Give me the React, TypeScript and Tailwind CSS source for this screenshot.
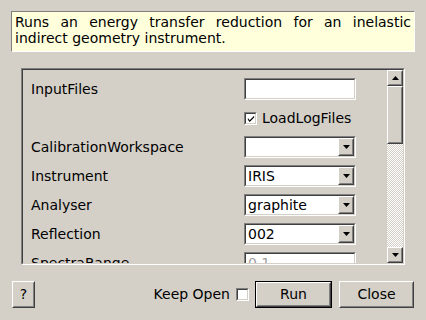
function Sunken({ className = "", children }: { className?: string; children?: React.ReactNode }) {
  return (
    <div className={"border border-t-[#808080] border-l-[#808080] border-b-white border-r-white " + className}>
      <div className="h-full w-full border border-t-[#404040] border-l-[#404040] border-b-[#d4d0c8] border-r-[#d4d0c8] bg-white flex items-center">
        {children}
      </div>
    </div>
  )
}

function Raised({ className = "", children }: { className?: string; children?: React.ReactNode }) {
  return (
    <div className={"border border-t-white border-l-white border-b-[#404040] border-r-[#404040] bg-[#d4d0c8] " + className}>
      <div className="h-full w-full border border-t-[#d4d0c8] border-l-[#d4d0c8] border-b-[#808080] border-r-[#808080] flex items-center justify-center">
        {children}
      </div>
    </div>
  )
}

function Arrow({ up = false }: { up?: boolean }) {
  return (
    <svg width="7" height="4" viewBox="0 0 7 4">
      {up ? <path d="M3.5 0 L7 4 L0 4 Z" fill="#000" /> : <path d="M0 0 L7 0 L3.5 4 Z" fill="#000" />}
    </svg>
  )
}

function Combo({ value }: { value: string }) {
  return (
    <Sunken className="w-[112px] h-[22px]">
      <span className="flex-1 pl-[2px] leading-none">{value}</span>
      <Raised className="w-[16px] h-[18px]">
        <Arrow />
      </Raised>
    </Sunken>
  )
}

function Check({ checked = false }: { checked?: boolean }) {
  return (
    <Sunken className="w-[13px] h-[13px]">
      {checked && (
        <svg width="9" height="9" viewBox="0 0 9 9" className="ml-px">
          <path d="M1 4 L3 6.5 L8 1.5 L8 3.5 L3 8.5 L1 6 Z" fill="#000" />
        </svg>
      )}
    </Sunken>
  )
}

const rows = [
  { label: "InputFiles", widget: <Sunken className="w-[112px] h-[22px]" /> },
  {
    label: "",
    widget: (
      <div className="flex items-center gap-[5px]">
        <Check checked />
        <span>LoadLogFiles</span>
      </div>
    ),
  },
  { label: "CalibrationWorkspace", widget: <Combo value="" /> },
  { label: "Instrument", widget: <Combo value="IRIS" /> },
  { label: "Analyser", widget: <Combo value="graphite" /> },
  { label: "Reflection", widget: <Combo value="002" /> },
  {
    label: "SpectraRange",
    widget: (
      <Sunken className="w-[112px] h-[22px]">
        <span className="pl-[2px] text-[#a0a0a0]">0.1</span>
      </Sunken>
    ),
  },
]

export default function App() {
  return (
    <div className="w-[426px] h-[320px] bg-[#d4d0c8] font-['DejaVu_Sans',sans-serif] text-[14px] text-black overflow-hidden flex flex-col">
      <div className="mx-[11px] mt-[11px] h-[41px] border border-t-[#808080] border-l-[#808080] border-b-white border-r-white bg-[#ffffdc] px-[3px] pt-[2px] leading-[16px] text-justify">
        Runs an energy transfer reduction for an inelastic indirect geometry instrument.
      </div>

      <div className="ml-[21px] mt-[16px] w-[384px] h-[197px] border border-t-[#808080] border-l-[#808080] border-b-white border-r-white">
        <div className="h-full w-full border border-t-[#404040] border-l-[#404040] border-b-[#d4d0c8] border-r-[#d4d0c8] flex">
          <div className="flex-1 overflow-hidden pt-[8px] pl-[8px] flex flex-col gap-[7px]">
            {rows.map((r, i) => (
              <div key={i} className="h-[22px] flex items-center shrink-0">
                <span className="w-[213px]">{r.label}</span>
                {r.widget}
              </div>
            ))}
          </div>
          <div className="w-[16px] flex flex-col">
            <Raised className="h-[16px]">
              <Arrow up />
            </Raised>
            <Raised className="h-[58px]" />
            <div className="flex-1 bg-[repeating-conic-gradient(#ffffff_0_25%,#d4d0c8_0_50%)] bg-[length:2px_2px]" />
            <Raised className="h-[16px]">
              <Arrow />
            </Raised>
          </div>
        </div>
      </div>

      <div className="mt-[16px] flex items-center px-[12px]">
        <Raised className="w-[23px] h-[27px]">?</Raised>
        <div className="flex-1 flex items-center justify-end gap-[6px]">
          <span>Keep Open</span>
          <Check />
        </div>
        <div className="ml-[6px] border border-black">
          <Raised className="w-[75px] h-[25px]">Run</Raised>
        </div>
        <Raised className="ml-[7px] w-[75px] h-[27px]">Close</Raised>
      </div>
    </div>
  )
}
